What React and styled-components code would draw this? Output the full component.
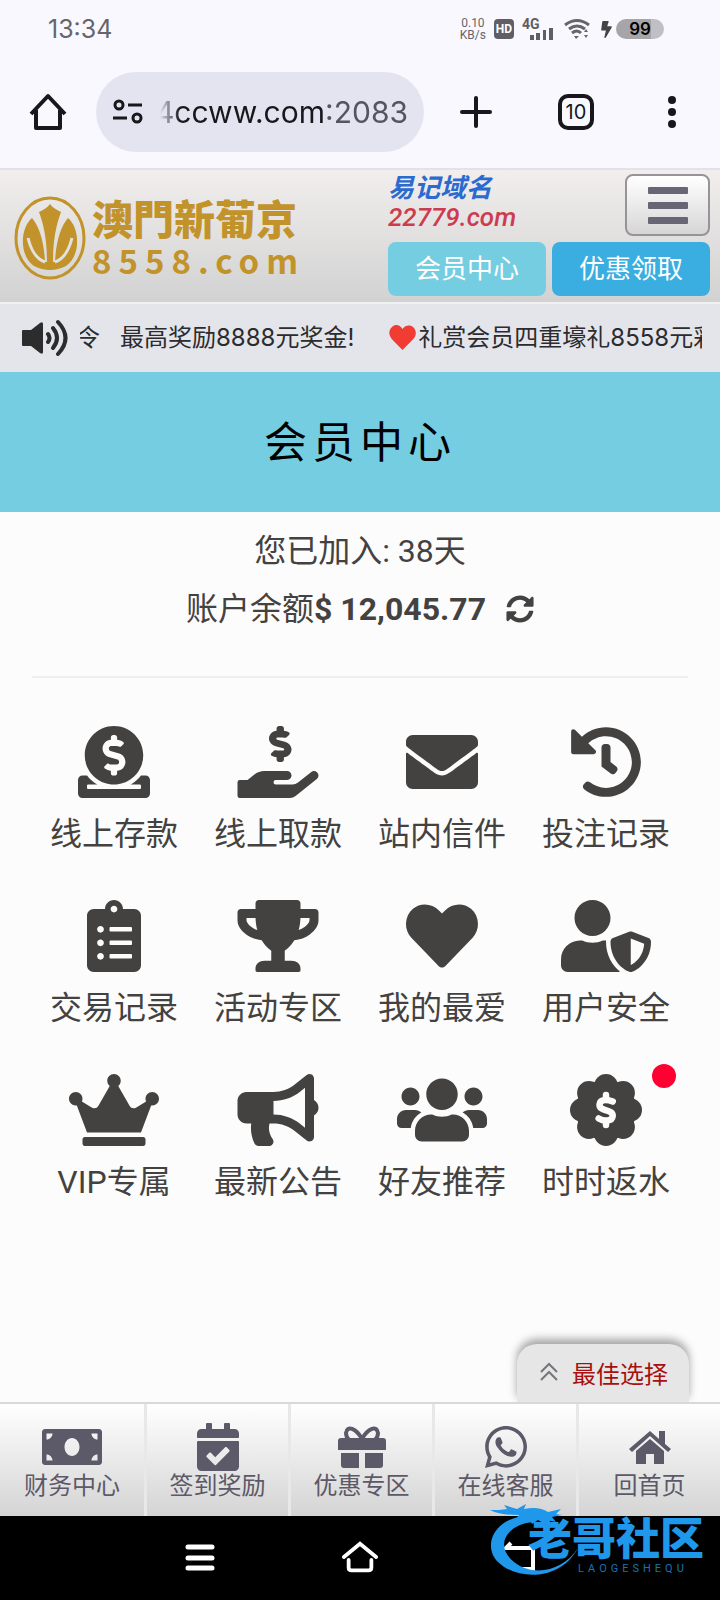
import React from 'react';
import styled, { createGlobalStyle } from 'styled-components';
import {
	FaBolt,
	FaBullhorn,
	FaCalendarCheck,
	FaClipboardList,
	FaCrown,
	FaDonate,
	FaEnvelope,
	FaHandHoldingUsd,
	FaHeart,
	FaHistory,
	FaMoneyBill,
	FaSyncAlt,
	FaTrophy,
	FaUserShield,
	FaUsers,
	FaWhatsapp,
} from 'react-icons/fa';

const GlobalStyle = createGlobalStyle`
	* {
		box-sizing: border-box;
	}
	body {
		margin: 0;
		background: #fcfcfc;
		color: #444240;
		font-family: Roboto, 'Noto Sans CJK SC', sans-serif;
	}
	button {
		font-family: inherit;
		color: inherit;
		padding: 0;
		border: none;
		background: none;
		cursor: pointer;
	}
	a {
		color: inherit;
		text-decoration: none;
	}
	svg {
		display: block;
		flex: none;
	}
`;

const Page = styled.div`
	display: flex;
	flex-direction: column;
	min-height: 100vh;
`;

const StatusBar = styled.header`
	display: flex;
	align-items: center;
	justify-content: space-between;
	height: 56px;
	padding: 2px 56px 0 48px;
	background: #f9f8ff;
	color: #66656b;
`;

const Clock = styled.time`
	font-size: 25px;
	font-family: Inter, sans-serif;
`;

const StatusIcons = styled.div`
	display: flex;
	align-items: center;
	gap: 8px;
`;

const NetSpeed = styled.span`
	font-size: 12px;
	line-height: 12px;
	text-align: center;
`;

const HdBadge = styled.span`
	background: #5f5e64;
	color: #fff;
	border-radius: 4px;
	width: 20px;
	height: 20px;
	font-size: 12px;
	line-height: 20px;
	font-weight: 700;
	text-align: center;
`;

const Signal = styled.svg`
	width: 34px;
	height: 24px;
	fill: #5f5e64;
	font-size: 14px;
	font-weight: 700;
`;

const Charge = styled.div`
	display: flex;
	align-items: center;
	gap: 1px;
	color: #444;
`;

const Battery = styled.span`
	width: 48px;
	height: 20px;
	border-radius: 10px;
	background: linear-gradient(90deg, #a6a5aa 72%, #c0bfc4 72%);
	color: #000;
	font-size: 17px;
	line-height: 20px;
	font-weight: 600;
	font-family: Inter, sans-serif;
	text-align: center;
`;

const BrowserBar = styled.nav`
	display: flex;
	align-items: center;
	height: 112px;
	padding: 0 32px 0 24px;
	background: #f9f8ff;
	color: #17171c;
`;

const Address = styled.div`
	flex: 1;
	display: flex;
	align-items: center;
	gap: 16px;
	height: 80px;
	margin: 0 32px 0 24px;
	padding: 0 16px;
	border-radius: 40px;
	background: #e4e3f0;
	overflow: hidden;
`;

const Url = styled.span`
	flex: 1;
	display: flex;
	justify-content: flex-end;
	overflow: hidden;
	white-space: nowrap;
	font-family: Inter, sans-serif;
	font-size: 30px;
	mask-image: linear-gradient(90deg, transparent, #000 20px);

	small {
		font-size: inherit;
		color: #55545f;
	}
`;

const BrowserActions = styled.div`
	display: flex;
	align-items: center;
	gap: 60px;
`;

const TabCount = styled.button`
	width: 40px;
	height: 40px;

	span {
		display: block;
		margin: 2px;
		border: 4px solid #17171c;
		border-radius: 10px;
		font-family: Inter, sans-serif;
		font-size: 20px;
		line-height: 28px;
	}
`;

const SiteHeader = styled.header`
	display: flex;
	justify-content: space-between;
	height: 136px;
	padding: 4px 10px 4px 14px;
	border-top: 2px solid #e4e2e8;
	border-bottom: 2px solid #f2f1f2;
	background: linear-gradient(#f1eeed, #d2d2d2);
`;

const Brand = styled.a`
	display: flex;
	align-items: center;
	gap: 6px;
	padding-top: 4px;
	color: #c1932a;
`;

const BrandText = styled.span`
	display: flex;
	flex-direction: column;
`;

const BrandName = styled.span`
	font-family: 'Noto Sans CJK TC', sans-serif;
	font-size: 41px;
	line-height: 44px;
	font-weight: 900;
`;

const BrandDomain = styled.span`
	font-family: 'Noto Sans CJK SC', sans-serif;
	font-size: 33px;
	line-height: 42px;
	font-weight: 700;
	letter-spacing: 7px;
`;

const HeaderSide = styled.div`
	display: flex;
	flex-direction: column;
	gap: 6px;
	width: 322px;
`;

const HeaderTop = styled.div`
	display: flex;
	justify-content: space-between;
`;

const Domain = styled.p`
	margin: 0;
	font-size: 26px;
	line-height: 30px;
	font-weight: 500;
	font-style: italic;
	color: #ce3b50;

	strong {
		display: block;
		font-weight: 700;
		line-height: 28px;
		color: #2b6bd0;
	}
`;

const MenuButton = styled.button`
	display: flex;
	flex-direction: column;
	align-items: center;
	justify-content: center;
	gap: 8px;
	width: 85px;
	height: 62px;
	border: 2px solid #969499;
	border-radius: 8px;
	background: linear-gradient(#fff, #d6d6d6);

	span {
		width: 40px;
		height: 7px;
		border-radius: 1px;
		background: #686675;
	}
`;

const HeaderLinks = styled.div`
	display: flex;
	gap: 6px;
`;

const HeaderLink = styled.a`
	flex: 1;
	height: 54px;
	border-radius: 8px;
	background: ${(props) => (props.$strong ? '#3aade1' : '#75cde1')};
	color: #fff;
	font-size: 26px;
	line-height: 54px;
	text-align: center;
`;

const Notice = styled.section`
	display: flex;
	align-items: center;
	gap: 12px;
	height: 68px;
	padding: 0 18px 0 22px;
	background: #e4e5eb;
	color: #2c2c2e;
`;

const NoticeText = styled.p`
	flex: 1;
	margin: 0;
	overflow: hidden;
	white-space: pre;
	text-indent: -4px;
	font-family: Inter, 'Noto Sans CJK SC', sans-serif;
	font-size: 24px;
	line-height: 36px;
`;

const NoticeItem = styled.span`
	margin-right: ${(props) => props.$gap || 0}px;
`;

const Heart = styled.svg`
	display: inline-block;
	width: 29px;
	height: 27px;
	margin-right: 1px;
	vertical-align: -5px;
	fill: #f03c32;
`;

const Title = styled.h1`
	margin: 0;
	height: 140px;
	background: #75cde1;
	color: #000;
	font-size: 43px;
	line-height: 142px;
	font-weight: 400;
	letter-spacing: 5px;
	text-align: center;
`;

const Account = styled.section`
	margin: 0 32px;
	padding: 10px 0 38px;
	border-bottom: 2px solid #eee;
	font-size: 32px;
	line-height: 58px;
	text-align: center;

	p {
		margin: 0;
		display: flex;
		align-items: center;
		justify-content: center;
	}
	button {
		margin-left: 20px;
	}
`;

const Menu = styled.ul`
	flex: 1;
	display: grid;
	grid-template-columns: repeat(4, 1fr);
	grid-auto-rows: 174px;
	margin: 0;
	padding: 48px 32px 0;
	list-style: none;
`;

const MenuLink = styled.a`
	position: relative;
	display: flex;
	flex-direction: column;
	align-items: center;
	gap: 12px;
	font-size: 32px;
	line-height: 48px;
	white-space: nowrap;

	svg {
		width: 90px;
		height: 72px;
	}
`;

const Dot = styled.i`
	position: absolute;
	top: -10px;
	right: 12px;
	width: 24px;
	height: 24px;
	border-radius: 50%;
	background: #ff0033;
`;

const BestPick = styled.button`
	display: flex;
	align-items: center;
	justify-content: center;
	gap: 14px;
	align-self: flex-end;
	width: 172px;
	height: 58px;
	margin-right: 31px;
	padding: 0 0 2px 2px;
	border-radius: 20px 20px 0 0;
	background: #e6e6e6;
	box-shadow: 0 -5px 8px rgba(0, 0, 0, 0.35);

	span {
		font-size: 24px;
		color: #a80f0f;
	}
`;

const TabBar = styled.nav`
	position: relative;
	display: flex;
	height: 114px;
	border-top: 2px solid #d8d8d8;
	background: linear-gradient(#fff, #d4d4d4);
`;

const Tab = styled.a`
	width: 20%;
	display: flex;
	flex-direction: column;
	align-items: center;
	justify-content: flex-end;
	padding-bottom: 12px;
	color: #5c5968;
	font-size: 24px;
	line-height: 36px;

	& + & {
		border-left: 3px solid #e8e8ea;
	}
`;

const TabIcon = styled.span`
	display: flex;
	align-items: center;
	justify-content: center;
	height: 42px;
`;

const SystemBar = styled.footer`
	position: relative;
	display: flex;
	align-items: center;
	justify-content: center;
	gap: 124px;
	height: 84px;
	background: #000;
	color: #fff;
`;

const Watermark = styled.div`
	position: absolute;
	right: 16px;
	bottom: 22px;
	display: flex;
	align-items: flex-end;
	color: #1f97ea;
`;

const WatermarkText = styled.div`
	display: flex;
	flex-direction: column;
	margin-left: -54px;
	font-size: 44px;
	line-height: 40px;
	font-weight: 900;

	small {
		padding-left: 50px;
		font-size: 11px;
		line-height: 18px;
		font-weight: 400;
		letter-spacing: 4px;
		color: #1873b5;
	}
`;

const icon = (viewBox, w, h, children) => () => (
	<svg viewBox={viewBox} width={w} height={h} fill='currentColor'>
		{children}
	</svg>
);

const RebateIcon = icon(
	'0 0 512 512',
	72,
	72,
	<>
		<circle cx='256' cy='256' r='216' />
		{[0, 45, 90, 135, 180, 225, 270, 315].map((a) => (
			<circle key={a} cx='256' cy='84' r='84' transform={`rotate(${a} 256 256)`} />
		))}
		<g fill='none' stroke='#fcfcfc' strokeWidth='46' strokeLinecap='round'>
			<path d='M256 150v26M256 336v26' />
			<path d='M304 196c-32-14-88-22-94 20-6 54 98 30 94 82-4 42-66 38-100 18' />
		</g>
	</>
);

const GiftIcon = icon(
	'0 0 48 42',
	48,
	42,
	<>
		<path
			d='M24 13C18 2 9-1 8 7c0 3 1 5 3 7M24 13C30 2 39-1 40 7c0 3-1 5-3 7'
			fill='none'
			stroke='currentColor'
			strokeWidth='4'
		/>
		<path d='M3 12h42a3 3 0 0 1 3 3v9H0v-9a3 3 0 0 1 3-3zM3 27h18v15H6a3 3 0 0 1-3-3zM27 27h18v12a3 3 0 0 1-3 3H27z' />
	</>
);

const HomeTabIcon = icon(
	'0 0 42 33',
	42,
	33,
	<>
		<path d='M21 0L0 18l3 3L21 5l18 16 3-3-6-5V0h-6v8z' />
		<path d='M21 8L7 20v13h10V23h8v10h10V20z' />
	</>
);

const LotusLogo = icon(
	'0 0 72 84',
	72,
	84,
	<>
		<ellipse cx='36' cy='42' rx='34' ry='40' fill='none' stroke='currentColor' strokeWidth='3' />
		<path d='M18 22C6 32 5 60 20 70q16 8 32 0C67 60 66 32 54 22c-7 8-12 23-13 44H31c-1-21-6-36-13-44z' />
		<path d='M36 8c3 4 7 6 11 8-5 14-8 28-8 50h-6c0-22-3-36-8-50 4-2 8-4 11-8z' />
		<path
			d='M14 42c3 12 8 21 17 24M58 42c-3 12-8 21-17 24'
			fill='none'
			stroke='#e3e1e0'
			strokeWidth='3'
		/>
	</>
);

const SpeakerIcon = icon(
	'0 0 46 38',
	46,
	38,
	<>
		<path d='M1 11h8L18 4q3-2 3 1v28q0 3-3 1l-9-7H1q-1 0-1-1V12q0-1 1-1z' />
		<path
			d='M26 15q3 4 0 8M31 9q8 10 0 20M36 3q15 16 0 32'
			fill='none'
			stroke='currentColor'
			strokeWidth='4'
			strokeLinecap='round'
		/>
	</>
);

const WifiIcon = icon(
	'0 0 26 22',
	26,
	22,
	<>
		<path
			d='M1 7q12-9 24 0M5 11q8-6 16 0M8 15q5-4 9 0'
			fill='none'
			stroke='currentColor'
			strokeWidth='3'
		/>
		<path d='M10 18h5l-3 3zM20 14l2-3 2 3zM20 17h4l-2 3z' />
	</>
);

const DragonMark = icon(
	'0 0 92 76',
	92,
	76,
	<>
		<path d='M36 14C4 16-8 44 8 60c18 18 62 20 80-14-14 22-44 30-64 14C4 44 16 22 44 20z' />
		<path d='M0 8c7 0 12 0 17-1l-3-4 13 4 9-5-2 5c10-2 18-1 24 3l13-3-5 5 6 1-10 2 4 5-10-2-1 4-7-4-6 4-2-4-9 3 3-6-8 2 3-4c-12 0-21-1-29-5z' />
	</>
);

const menuItems = [
	{ label: '线上存款', Icon: FaDonate },
	{ label: '线上取款', Icon: FaHandHoldingUsd },
	{ label: '站内信件', Icon: FaEnvelope },
	{ label: '投注记录', Icon: FaHistory },
	{ label: '交易记录', Icon: FaClipboardList },
	{ label: '活动专区', Icon: FaTrophy },
	{ label: '我的最爱', Icon: FaHeart },
	{ label: '用户安全', Icon: FaUserShield },
	{ label: 'VIP专属', Icon: FaCrown },
	{ label: '最新公告', Icon: FaBullhorn },
	{ label: '好友推荐', Icon: FaUsers },
	{ label: '时时返水', Icon: RebateIcon, dot: true },
];

const tabs = [
	{ label: '财务中心', Icon: FaMoneyBill, size: 60 },
	{ label: '签到奖励', Icon: FaCalendarCheck, size: 48 },
	{ label: '优惠专区', Icon: GiftIcon },
	{ label: '在线客服', Icon: FaWhatsapp, size: 48 },
	{ label: '回首页', Icon: HomeTabIcon },
];

const PhoneStatus = () => (
	<StatusBar>
		<Clock>13:34</Clock>
		<StatusIcons>
			<NetSpeed>
				0.10
				<br />
				KB/s
			</NetSpeed>
			<HdBadge>HD</HdBadge>
			<Signal viewBox='0 0 34 24'>
				<text x='0' y='12'>4G</text>
				<path d='M8 18h4v5H8zM14 16h4v7h-4zM21 13h3v10h-3zM27 11h4v12h-4z' />
			</Signal>
			<WifiIcon />
			<Charge>
				<FaBolt size={17} />
				<Battery>99</Battery>
			</Charge>
		</StatusIcons>
	</StatusBar>
);

const Browser = () => (
	<BrowserBar>
		<button aria-label='Home'>
			<svg width='48' height='48' viewBox='0 0 48 48' fill='none' stroke='currentColor' strokeWidth='4'>
				<path d='M7 26L24 8l17 18M12 22v18h24V22' strokeLinejoin='round' />
			</svg>
		</button>
		<Address>
			<svg width='32' height='28' viewBox='0 0 32 28' fill='none' stroke='currentColor' strokeWidth='3'>
				<circle cx='7' cy='7' r='4' />
				<circle cx='25' cy='20' r='4' />
				<path d='M16 7h14M1 20h14' />
			</svg>
			<Url>
				4ccww.com<small>:2083</small>
			</Url>
		</Address>
		<BrowserActions>
			<button aria-label='New tab'>
				<svg width='40' height='40' viewBox='0 0 40 40' stroke='currentColor' strokeWidth='4' strokeLinecap='round'>
					<path d='M20 6v28M6 20h28' />
				</svg>
			</button>
			<TabCount aria-label='Tabs'>
				<span>10</span>
			</TabCount>
			<button aria-label='More'>
				<svg width='32' height='40' viewBox='0 0 32 40' fill='currentColor'>
					<circle cx='16' cy='8' r='4' />
					<circle cx='16' cy='20' r='4' />
					<circle cx='16' cy='32' r='4' />
				</svg>
			</button>
		</BrowserActions>
	</BrowserBar>
);

const SystemNav = () => (
	<SystemBar>
		<button aria-label='Recent apps'>
			<svg width='36' height='36' viewBox='0 0 36 36' stroke='currentColor' strokeWidth='5' strokeLinecap='round'>
				<path d='M6 7h24M6 18h24M6 28h24' />
			</svg>
		</button>
		<button aria-label='Home screen'>
			<svg width='36' height='36' viewBox='-1 0 38 36' fill='none' stroke='currentColor' strokeWidth='4' strokeLinecap='round'>
				<path d='M1 17L18 3l17 14M6 20v8q0 3 3 3h18q3 0 3-3v-8' />
			</svg>
		</button>
		<button aria-label='Back'>
			<svg width='36' height='36' viewBox='0 0 36 36' fill='none' stroke='currentColor' strokeWidth='4'>
				<path d='M9 3L4 8h27v21H10' />
			</svg>
		</button>
		<Watermark>
			<DragonMark />
			<WatermarkText>
				老哥社区
				<small>LAOGESHEQU</small>
			</WatermarkText>
		</Watermark>
	</SystemBar>
);

const App = () => (
	<>
		<GlobalStyle />
		<Page>
			<PhoneStatus />
			<Browser />
			<SiteHeader>
				<Brand href='#'>
					<LotusLogo />
					<BrandText>
						<BrandName>澳門新葡京</BrandName>
						<BrandDomain>8558.com</BrandDomain>
					</BrandText>
				</Brand>
				<HeaderSide>
					<HeaderTop>
						<Domain>
							<strong>易记域名</strong>22779.com
						</Domain>
						<MenuButton aria-label='菜单'>
							<span />
							<span />
							<span />
						</MenuButton>
					</HeaderTop>
					<HeaderLinks>
						<HeaderLink href='#'>会员中心</HeaderLink>
						<HeaderLink href='#' $strong>优惠领取</HeaderLink>
					</HeaderLinks>
				</HeaderSide>
			</SiteHeader>
			<Notice>
				<SpeakerIcon />
				<NoticeText>
					<NoticeItem $gap={20}>令</NoticeItem>
					<NoticeItem $gap={34}>最高奖励8888元奖金!</NoticeItem>
					<Heart viewBox='0 0 72 72'>
						<path d='M36 13C43 3 56 1 64 8s10 19 4 28c-2 3-4 5-7 8L36 69 11 44C-2 32-2 17 8 8s21-5 28 5z' />
					</Heart>
					<NoticeItem>礼赏会员四重壕礼8558元彩</NoticeItem>
				</NoticeText>
			</Notice>
			<Title>会员中心</Title>
			<Account>
				<p>您已加入: 38天</p>
				<p>
					账户余额<b>$ 12,045.77</b>
					<button aria-label='刷新'>
						<FaSyncAlt size={28} />
					</button>
				</p>
			</Account>
			<Menu>
				{menuItems.map(({ label, Icon, dot }) => (
					<li key={label}>
						<MenuLink href='#'>
							<Icon />
							{label}
							{dot && <Dot />}
						</MenuLink>
					</li>
				))}
			</Menu>
			<BestPick>
				<svg width='18' height='20' viewBox='0 0 18 20' fill='none' stroke='#77757a' strokeWidth='2'>
					<path d='M1 10l8-8 8 8M1 18l8-8 8 8' />
				</svg>
				<span>最佳选择</span>
			</BestPick>
			<TabBar>
				{tabs.map(({ label, Icon, size }) => (
					<Tab key={label} href='#'>
						<TabIcon>
							<Icon size={size} />
						</TabIcon>
						{label}
					</Tab>
				))}
			</TabBar>
			<SystemNav />
		</Page>
	</>
);

export default App;
